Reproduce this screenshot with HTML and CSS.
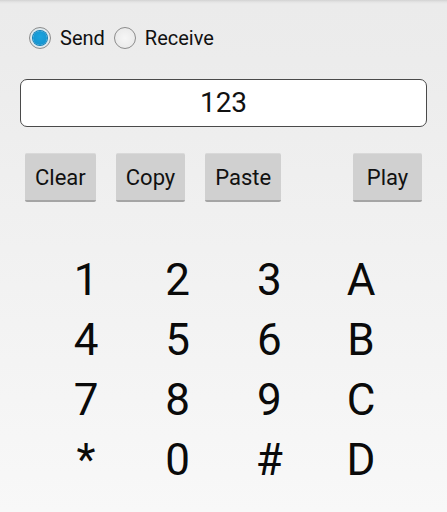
FILE: index.html
```html
<!DOCTYPE html>
<html>
<head>
<meta charset="utf-8">
<link rel="stylesheet" href="styles.css">
</head>
<body>
<div class="app">
  <div class="radios">
    <label class="radio"><span class="dot checked"></span><span class="rlabel">Send</span></label>
    <label class="radio"><span class="dot"></span><span class="rlabel">Receive</span></label>
  </div>
  <div class="field">123</div>
  <div class="buttons">
    <div class="btn">Clear</div>
    <div class="btn">Copy</div>
    <div class="btn">Paste</div>
    <div class="btn play">Play</div>
  </div>
  <div class="keypad">
    <span>1</span><span>2</span><span>3</span><span>A</span>
    <span>4</span><span>5</span><span>6</span><span>B</span>
    <span>7</span><span>8</span><span>9</span><span>C</span>
    <span>*</span><span>0</span><span>#</span><span>D</span>
  </div>
</div>
</body>
</html>
```
FILE: styles.css
```css
html, body {
  margin: 0;
  padding: 0;
  height: 100%;
}
body {
  font-family: Roboto, "Liberation Sans", sans-serif;
  color: #111;
  background: linear-gradient(to bottom, #d2d2d2 0px, #e4e4e4 2px, #ebebeb 4px, #ececec 60px, #f8f8f8 100%);
  overflow: hidden;
}
.app {
  padding-top: 27px;
}
.radios {
  display: flex;
  align-items: center;
  height: 22px;
  padding-left: 29px;
}
.radio {
  display: flex;
  align-items: center;
  margin-right: 9px;
}
.dot {
  box-sizing: border-box;
  width: 22px;
  height: 22px;
  border-radius: 50%;
  border: 1px solid #8c8c8c;
  background: radial-gradient(circle, #f6f6f6 0, #e6e6e6 100%);
  display: flex;
  align-items: center;
  justify-content: center;
}
.dot.checked {
  background: radial-gradient(circle, #e9f1f5 0, #d7e4ea 100%);
}
.dot.checked::after {
  content: "";
  width: 14px;
  height: 14px;
  border-radius: 50%;
  background: radial-gradient(circle at 50% 40%, #1ba3de 0, #1190cc 100%);
  box-shadow: 0 0 0 1px #0f7fb6;
}
.rlabel {
  font-size: 20px;
  margin-left: 9px;
  line-height: 22px;
  color: #111;
}
.field {
  box-sizing: border-box;
  margin: 30px 20px 0 20px;
  height: 48px;
  border: 1px solid #4a4a4a;
  border-radius: 7px;
  background: #fff;
  font-size: 28px;
  line-height: 46px;
  text-align: center;
  color: #111;
}
.buttons {
  display: flex;
  gap: 20px;
  padding: 0 25px;
  margin-top: 26px;
}
.btn {
  box-sizing: border-box;
  height: 49px;
  min-width: 69px;
  padding: 1px 10px 0 10px;
  background: #d0d0d0;
  border-top: 1px solid #d9d9d9;
  border-bottom: 2px solid #a5a5a5;
  border-radius: 2px;
  font-size: 22px;
  line-height: 46px;
  text-align: center;
  color: #111;
}
.play {
  margin-left: auto;
}
.keypad {
  display: grid;
  grid-template-columns: repeat(4, 91.67px);
  justify-content: center;
  margin-top: 48px;
  font-size: 44px;
  line-height: 60px;
  text-align: center;
  color: #0a0a0a;
}
```
